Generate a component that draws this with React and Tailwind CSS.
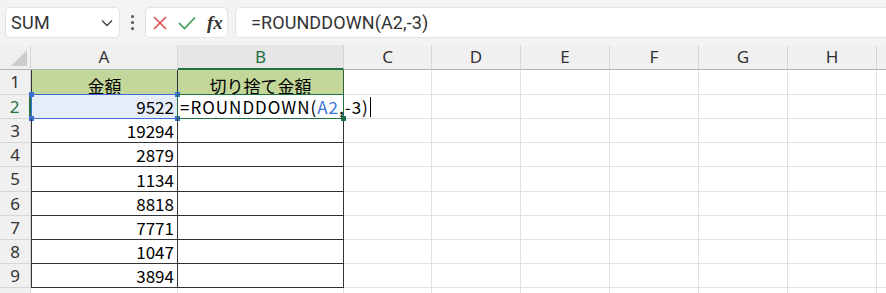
import React from 'react';

const cols = [
  { l: 'A', w: 147 },
  { l: 'B', w: 166 },
  { l: 'C', w: 88 },
  { l: 'D', w: 89 },
  { l: 'E', w: 89 },
  { l: 'F', w: 89 },
  { l: 'G', w: 89 },
  { l: 'H', w: 89 },
  { l: '', w: 40 },
];

const rows = [
  { n: 1, h: 25 },
  { n: 2, h: 24 },
  { n: 3, h: 24 },
  { n: 4, h: 24 },
  { n: 5, h: 25 },
  { n: 6, h: 24 },
  { n: 7, h: 24 },
  { n: 8, h: 24 },
  { n: 9, h: 24 },
  { n: 10, h: 24 },
];

const amounts = { 2: '9522', 3: '19294', 4: '2879', 5: '1134', 6: '8818', 7: '7771', 8: '1047', 9: '3894' };

const cellFont = { fontFamily: '"Noto Sans CJK JP", "Noto Sans", sans-serif' };

function Handle({ className }) {
  return <span className={`absolute w-[5px] h-[5px] ${className}`} />;
}

function Toolbar() {
  return (
    <div className="h-[45px] bg-[#f3f3f3] flex items-center" style={{ fontFamily: 'Roboto, "Noto Sans", sans-serif' }}>
      <div className="ml-[5px] w-[115px] h-[31px] bg-white rounded-[5px] border border-[#e3e3e3] flex items-center justify-between pl-[5px] pr-[6px]">
        <span className="text-[18px] text-[#333] tracking-[0.3px]">SUM</span>
        <svg width="12" height="8" viewBox="0 0 12 8" fill="none" stroke="#444" strokeWidth="1.4">
          <path d="M1 1.5 L6 6.5 L11 1.5" />
        </svg>
      </div>
      <div className="w-[25px] flex flex-col items-center gap-[3px]">
        <span className="w-[3px] h-[3px] rounded-full bg-[#555]" />
        <span className="w-[3px] h-[3px] rounded-full bg-[#555]" />
        <span className="w-[3px] h-[3px] rounded-full bg-[#555]" />
      </div>
      <div className="w-[83px] h-[31px] bg-white rounded-[5px] border border-[#e3e3e3] flex items-center pl-[6px]">
        <svg width="16" height="16" viewBox="0 0 16 16" stroke="#e04b4b" strokeWidth="1.6" fill="none">
          <path d="M2 2 L14 14 M14 2 L2 14" />
        </svg>
        <svg className="ml-[10px]" width="18" height="14" viewBox="0 0 18 14" stroke="#3f9a57" strokeWidth="1.6" fill="none">
          <path d="M1 7 L6.5 12.5 L17 1.5" />
        </svg>
        <span className="ml-[11px] text-[19px] italic font-bold text-[#333] leading-none" style={{ fontFamily: '"Liberation Serif", serif' }}>
          fx
        </span>
      </div>
      <div className="ml-[7px] flex-1 h-[31px] bg-white rounded-l-[5px] border border-r-0 border-[#e3e3e3] flex items-center pl-[15px]">
        <span className="text-[18px] text-[#333] tracking-[0.1px]">=ROUNDDOWN(A2,-3)</span>
      </div>
    </div>
  );
}

function HeaderRow() {
  return (
    <div className="flex h-[25px] bg-[#f0f0f0]" style={{ fontFamily: '"Noto Sans", Roboto, sans-serif' }}>
      <div className="relative w-[31px] shrink-0 border-b border-[#b4b4b4] border-r border-r-[#d6d6d6]">
        <svg className="absolute right-[3px] bottom-[3px]" width="16" height="16" viewBox="0 0 16 16">
          <path d="M16 0 L16 16 L0 16 Z" fill="#cdcdcd" />
        </svg>
      </div>
      {cols.map((c, i) => {
        const sel = c.l === 'B';
        return (
          <div
            key={i}
            style={{ width: c.w }}
            className={`shrink-0 flex items-center justify-center text-[17px] border-r border-r-[#d6d6d6] ${
              sel ? 'border-b-2 border-b-[#1e7145] text-[#1e7145] bg-[#e6e6e6]' : 'border-b border-b-[#b4b4b4] text-[#333]'
            }`}
          >
            {c.l}
          </div>
        );
      })}
    </div>
  );
}

function Cell({ col, row }) {
  const inTable = row.n <= 9 && (col.l === 'A' || col.l === 'B');
  const base = 'relative shrink-0 box-border flex items-end';
  if (!inTable) {
    return <div style={{ width: col.w }} className={`${base} border-r border-b border-[#e1e1e1]`} />;
  }
  if (row.n === 1) {
    return (
      <div
        style={{ width: col.w, ...cellFont }}
        className={`${base} justify-center items-center bg-[#c4d79b] border-r border-b ${
          col.l === 'A' ? 'border-l border-[#333]' : 'border-[#2f5f3a]'
        } text-[17px] text-black leading-none`}
      >
        {col.l === 'A' ? '金額' : '切り捨て金額'}
      </div>
    );
  }
  if (col.l === 'A') {
    const isSel = row.n === 2;
    return (
      <div
        style={{ width: col.w, ...cellFont }}
        className={`${base} justify-end pr-[3px] pb-[1px] text-[17px] text-black leading-[20px] border-r border-b border-l border-[#333] ${
          isSel ? 'bg-[#e7edf8]' : ''
        }`}
      >
        {amounts[row.n]}
        {isSel && (
          <>
            <span className="absolute -left-px -top-px -right-px -bottom-px border border-[#3b6fd1] pointer-events-none" />
            <Handle className="-left-[3px] -top-[3px] bg-[#3b6fd1]" />
            <Handle className="-right-[3px] -top-[3px] bg-[#3b6fd1]" />
            <Handle className="-left-[3px] -bottom-[3px] bg-[#3b6fd1]" />
            <Handle className="-right-[3px] -bottom-[3px] bg-[#3b6fd1]" />
          </>
        )}
      </div>
    );
  }
  const isEdit = row.n === 2;
  return (
    <div style={{ width: col.w, ...cellFont }} className={`${base} border-r border-b border-[#333]`}>
      {isEdit && (
        <>
          <span className="absolute -left-px -top-px -right-px -bottom-px border border-[#1e7145] pointer-events-none" />
          <span className="absolute left-[2px] bottom-[1px] z-10 whitespace-nowrap text-[17px] leading-[20px] tracking-[1px] text-black flex items-end">
            <span>=ROUNDDOWN(</span>
            <span className="text-[#3a74d8]">A2</span>
            <span>,-3)</span>
            <span className="ml-[1px] w-px h-[20px] bg-black" />
          </span>
          <Handle className="-right-[3px] -bottom-[3px] bg-[#1e7145] z-10" />
        </>
      )}
    </div>
  );
}

export default function App() {
  return (
    <div className="w-[886px] h-[293px] overflow-hidden bg-white">
      <Toolbar />
      <HeaderRow />
      <div>
        {rows.map((row) => (
          <div key={row.n} className="flex" style={{ height: row.h }}>
            <div
              className={`w-[31px] shrink-0 flex items-center justify-center bg-[#f0f0f0] border-b border-[#d6d6d6] text-[17px] ${
                row.n === 2 ? 'text-[#1e7145] bg-[#e6e6e6] border-r-2 border-r-[#1e7145]' : 'text-[#333] border-r border-r-[#d6d6d6]'
              }`}
              style={{ fontFamily: '"Noto Sans", Roboto, sans-serif' }}
            >
              {row.n <= 9 ? row.n : ''}
            </div>
            {cols.map((c, i) => (
              <Cell key={i} col={c} row={row} />
            ))}
          </div>
        ))}
      </div>
    </div>
  );
}
